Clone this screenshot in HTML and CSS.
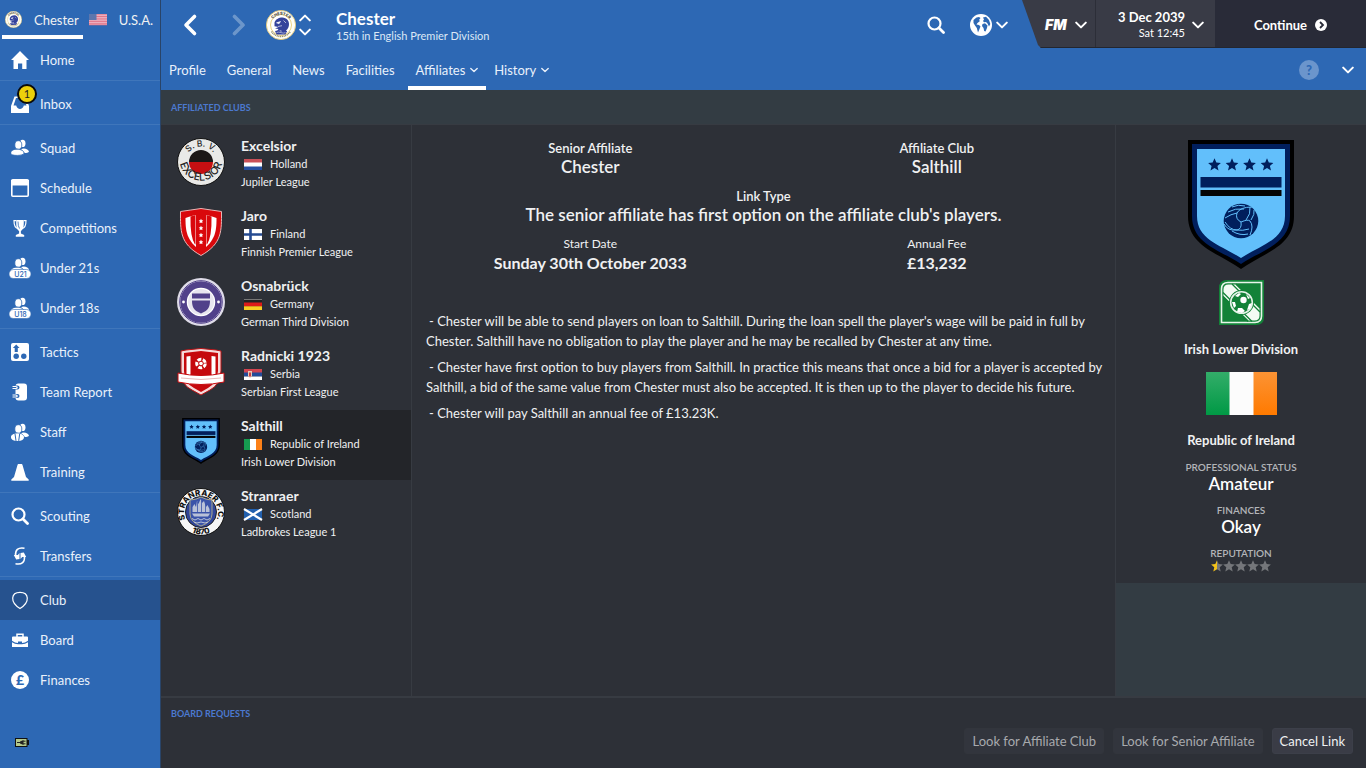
FILE: index.html
```html
<!DOCTYPE html>
<html lang="en">
<head>
<meta charset="utf-8">
<title>Chester - Affiliates</title>
<meta name="viewport" content="width=device-width, initial-scale=1">
<link rel="stylesheet" href="styles.css">
</head>
<body>
<svg class="sprite" aria-hidden="true">
  <symbol id="chev" viewBox="0 0 10 10"><path d="M1 3l4 4 4-4" fill="none" stroke="currentColor" stroke-width="1.700" stroke-linecap="round" stroke-linejoin="round"/></symbol>
  <symbol id="search" viewBox="0 0 18 18"><circle cx="7.500" cy="7.500" r="6" fill="none" stroke="currentColor" stroke-width="2.200"/><path d="M12 12l4.500 4.500" stroke="currentColor" stroke-width="2.800" stroke-linecap="round"/></symbol>
  <symbol id="people" viewBox="0 0 18 18"><g fill="currentColor"><ellipse cx="11.600" cy="4.400" rx="2.900" ry="3.700"/><path d="M10 10.200c3-2 7.600 0 8 2.600-.5.800-2.500 1.200-4.300 1.200z"/></g><g fill="currentColor" stroke="var(--bg)" stroke-width=".8"><ellipse cx="7.300" cy="6" rx="3.500" ry="4.300"/><path d="M-.3 14.200c0-2.700 3-4 6.300-4s7 1.300 7 4-13.300 3.200-13.300 0z"/></g></symbol>
  <symbol id="crest-chester" viewBox="0 0 30 30">
    <circle cx="15" cy="15" r="14.600" fill="#fffef5" stroke="#e5c878" stroke-width=".9"/>
    <circle cx="15" cy="15" r="10.500" fill="#fff" stroke="#ecd281" stroke-width="1"/>
    <path id="chester-arc" d="M4.900 15a10.100 10.100 0 0 1 20.200 0" fill="none"/>
    <text class="crest-text" font-size="4" fill="#454545" text-anchor="middle"><textPath href="#chester-arc" startOffset="50%">CHESTER</textPath></text>
    <path d="M5.500 21.500a11.500 11.500 0 0 0 19 0" fill="none" stroke="#8a8566" stroke-width="1.500" stroke-dasharray="1 .7"/>
    <path d="M8.500 12.500c1-3 4-5 8-5 4 .3 6.500 3 6.500 6.500 0 3-1 5-3 6.500l1 1.500h-4l-2-1.500-4 .8 1.500-2.300-3.500-.5 3.500-1.500-4-.8z" fill="#34429b"/>
    <path d="M10.500 12.800l4-1.300-1.500 2.300zM12 16.500l4-.8M17.500 10.500l2.500 2.500" fill="#fff" stroke="#fff" stroke-width=".6"/>
    <path d="M9 21q3-1 6 .5 3-1.500 6-.5l-1.500 3.500h-9z" fill="#34429b"/><path d="M10.500 22.600q2-1 4.500 0 2.500 1 4.500 0" fill="none" stroke="#fff" stroke-width=".5"/>
  </symbol>
  <symbol id="star" viewBox="0 0 12 12"><path d="M6 .2l1.700 3.900 4.200.4-3.200 2.800 1 4.200L6 9.300l-3.700 2.200 1-4.200L.1 4.500l4.200-.4z"/></symbol>
  <symbol id="crest-salthill" viewBox="0 0 106 129">
    <path d="M0 0h106v76c0 31-31 37-53 53C31 113 0 107 0 76z" fill="#000"/>
    <path d="M4 4h98v72c0 28-28 34-49 48C32 110 4 104 4 76z" fill="#011f5d"/>
    <path d="M9 9h88v67c0 24-24 29-44 42C33 105 9 100 9 76z" fill="#62bffb"/>
    <g fill="#011f5d"><use href="#star" x="20" y="18" width="13" height="13"/><use href="#star" x="37.500" y="18" width="13" height="13"/><use href="#star" x="55" y="18" width="13" height="13"/><use href="#star" x="72.500" y="18" width="13" height="13"/></g>
    <path d="M12.500 37h81v10.500h-81z" fill="#011f5d"/><path d="M12.500 50h81v6h-81z" fill="#050505"/>
    <circle cx="53" cy="81" r="17.300" fill="#011f5d"/>
    <path d="M53 82q-6-3-4-9 3-6 15-6M53 82q7-3 9-1 4 5 0 14M53 82q1 7-4 8-7 0-12-8M49 73q-6 1-12 5M44 67q6-3 13-1M40 72q7-4 16-3M58 80q5-6 4-13M63 80q4-6 3-10M48 90q7 1 13-1M44 91q8 5 16 3M36 84q4 7 12 6" fill="none" stroke="#62bffb" stroke-width="1"/>
  </symbol>
</svg>

<aside class="sidebar">
  <div class="managed">
    <a class="managed-tab is-active" href="#chester"><svg class="managed-crest" aria-hidden="true"><use href="#crest-chester"/></svg>Chester</a>
    <a class="managed-tab" href="#usa"><svg class="flag" viewBox="0 0 18 11" aria-hidden="true"><path fill="#f1c6d4" d="M0 0h18v11H0z"/><path d="M0 .8h18M0 2.500h18M0 4.200h18M0 5.900h18M0 7.600h18M0 9.300h18M0 10.800h18" stroke="#df6c80" stroke-width=".9"/><path fill="#5d76ad" d="M0 0h7.500v6H0z"/></svg>U.S.A.</a>
  </div>
  <nav class="nav" aria-label="Main">
    <div class="nav-group">
      <a class="nav-item" href="#home"><svg class="nav-icon" viewBox="0 0 18 18"><path fill="currentColor" d="M9 0l9 9h-2.500v9h-4.300v-5.500H7V18H2.500V9H0z"/></svg>Home</a>
    </div>
    <div class="nav-group">
      <a class="nav-item" href="#inbox"><svg class="nav-icon" viewBox="0 0 18 18"><path fill="currentColor" fill-rule="evenodd" d="M3.500 1.500h11L18 11v7H0v-7zM5 3L2.500 10.500h2.700c1 4.500 6.600 4.500 7.600 0h2.700L13 3z"/></svg><span class="badge">1</span>Inbox</a>
    </div>
    <div class="nav-group">
      <a class="nav-item" href="#squad"><svg class="nav-icon"><use href="#people"/></svg>Squad</a>
      <a class="nav-item" href="#schedule"><svg class="nav-icon" viewBox="0 0 18 18"><rect x=".8" y=".8" width="16.400" height="16.400" rx="1" fill="none" stroke="currentColor" stroke-width="1.600"/><path fill="currentColor" d="M0 1h18v5.500H0z"/></svg>Schedule</a>
      <a class="nav-item" href="#competitions"><svg class="nav-icon" viewBox="0 0 18 18"><path fill="currentColor" d="M5.200 1h7.600c0 6 0 9-2.900 11v2.500l3.300 1.500v1.700H4.800V16l3.300-1.500V12C5.200 10 5.200 7 5.200 1z"/><path fill="none" stroke="currentColor" stroke-width="1.200" d="M5 1.700H3c0 4 .5 7 4 8M13 1.700h2c0 4-.5 7-4 8"/><path d="M7 2.500q0 5 1.500 7" fill="none" stroke="#2d68b4" stroke-width=".8"/></svg>Competitions</a>
      <a class="nav-item" href="#u21"><svg class="nav-icon wide" viewBox="0 0 22 22"><use href="#people" x="2" y="0" width="18" height="18"/><rect y="12.500" width="22" height="9" rx="4.500" fill="currentColor" stroke="#2d68b4" stroke-width=".6"/><text class="icon-text" x="11.500" y="19.500" text-anchor="middle">U21</text></svg>Under 21s</a>
      <a class="nav-item" href="#u18"><svg class="nav-icon wide" viewBox="0 0 22 22"><use href="#people" x="2" y="0" width="18" height="18"/><rect y="12.500" width="22" height="9" rx="4.500" fill="currentColor" stroke="#2d68b4" stroke-width=".6"/><text class="icon-text" x="11.500" y="19.500" text-anchor="middle">U18</text></svg>Under 18s</a>
    </div>
    <div class="nav-group">
      <a class="nav-item" href="#tactics"><svg class="nav-icon" viewBox="0 0 18 18"><rect width="18" height="18" rx="2" fill="currentColor"/><g fill="#2d68b4"><circle cx="5.200" cy="13.300" r="2.700"/><circle cx="12.800" cy="13.300" r="2.700"/><path d="M5.200 1.500L8.600 5H6.800v4H3.700V5H1.900z"/></g></svg>Tactics</a>
      <a class="nav-item" href="#report"><svg class="nav-icon" viewBox="0 0 18 18"><rect x="4.500" y=".5" width="11.500" height="17" rx="3" fill="currentColor"/><path d="M2 4.500h4.500M2 13h4.500" stroke="#2d68b4" stroke-width="4" stroke-linecap="round"/><path d="M1.500 3.500h3.300q1.400 0 1.400 1T4.800 5.500H1.500M1.500 12h3.300q1.400 0 1.400 1t-1.400 1H1.500" stroke="currentColor" fill="none" stroke-width="1.200"/></svg>Team Report</a>
      <a class="nav-item" href="#staff"><svg class="nav-icon" viewBox="0 0 18 18"><use href="#people" width="18" height="18"/><path fill="currentColor" d="M0 14q1-3.500 6.500-3.500T13 14q0 4-6.500 4T0 14z"/><path d="M4 10.800l1 7M8.700 10.800l-1 7" stroke="#2d68b4"/></svg>Staff</a>
      <a class="nav-item" href="#training"><svg class="nav-icon" viewBox="0 0 18 18"><path fill="currentColor" d="M7.300 1h3.400q.5 0 .8 1l3.500 12 2.700 2.500v1.200H.3v-1.200L3 14 6.500 2q.3-1 .8-1z"/></svg>Training</a>
    </div>
    <div class="nav-group">
      <a class="nav-item" href="#scouting"><svg class="nav-icon"><use href="#search"/></svg>Scouting</a>
      <a class="nav-item" href="#transfers"><svg class="nav-icon" viewBox="0 0 18 18"><path fill="none" stroke="currentColor" stroke-width="1.500" d="M13.500 1.200C7 0 4 3 4.500 9M4.500 16.800c6.500 1.200 9.500-1.800 9-7.800"/><path fill="currentColor" d="M2.800 8l2.400 4.500L8.500 12V6L6.800 8zM15.200 10l-2.400-4.500L9.500 6v6L11.200 10z"/></svg>Transfers</a>
    </div>
    <div class="nav-group">
      <a class="nav-item is-active" href="#club" aria-current="page"><svg class="nav-icon" viewBox="0 0 18 18"><path fill="none" stroke="currentColor" stroke-width="1.200" d="M9 17.500C5 15 1.500 11 1.700 7 2 2.500 5.500 1.300 9 1.300s7 1.200 7.300 5.700C16.500 11 13 15 9 17.500z"/></svg>Club</a>
      <a class="nav-item" href="#board"><svg class="nav-icon" viewBox="0 0 18 18"><path fill="none" stroke="currentColor" stroke-width="1.500" d="M6 6V3.200h6V6"/><path fill="currentColor" d="M2 5.500h14q1 0 1 1v3.200q-3 2.300-6 2.300v-1.500H7V12q-3 0-6-2.300V6.500q0-1 1-1zM1 11.200Q4 13 7 13.200h4q3-.2 6-2V16H1z"/></svg>Board</a>
      <a class="nav-item" href="#finances"><svg class="nav-icon" viewBox="0 0 18 18"><circle cx="9" cy="9" r="9" fill="currentColor"/><text class="pound" x="9" y="14" text-anchor="middle">£</text></svg>Finances</a>
    </div>
  </nav>
  <svg class="battery" viewBox="0 0 14 9" role="img" aria-label="Battery charging"><rect x=".5" y=".5" width="11.500" height="8" fill="#b3c88b" stroke="#111"/><path d="M12 2h2v5h-2z" fill="#111"/><path d="M2 4.500h3m3-1.300h2.500M8 5.800h2.500" stroke="#222"/><path d="M8.500 2v5L5 5.500v-2z" fill="#222"/></svg>
</aside>

<div class="app">
  <header class="header">
    <div class="topbar">
      <button class="icon-btn back" aria-label="Back"><svg viewBox="0 0 14 22"><path d="M11.500 2.500L3 11l8.500 8.500" fill="none" stroke="currentColor" stroke-width="3.600" stroke-linecap="round" stroke-linejoin="round"/></svg></button>
      <button class="icon-btn back forward" aria-label="Forward" disabled><svg viewBox="0 0 14 22"><path d="M2.500 2.500L11 11l-8.500 8.500" fill="none" stroke="currentColor" stroke-width="3.600" stroke-linecap="round" stroke-linejoin="round"/></svg></button>
      <svg class="header-crest" role="img" aria-label="Chester crest"><use href="#crest-chester"/></svg>
      <div class="stepper">
        <button class="icon-btn" aria-label="Previous club"><svg class="chev up"><use href="#chev"/></svg></button>
        <button class="icon-btn" aria-label="Next club"><svg class="chev"><use href="#chev"/></svg></button>
      </div>
      <div class="heading"><h1 class="title">Chester</h1><p class="subtitle">15th in English Premier Division</p></div>
      <button class="icon-btn search" aria-label="Search"><svg><use href="#search"/></svg></button>
      <button class="icon-btn globe" aria-label="World"><svg class="world" viewBox="0 0 22 22"><circle cx="11" cy="11" r="11" fill="#fff"/><path fill="#2d68b4" d="M3.500 6l3-2.500L9 3l1.500 1L9 6l1 1-2.500 2-1 1.500L9 11l1.500 1.500L9.500 15 8 18.500 6.800 14 5 11.500 3.500 9zM13 3.500l3-.8 3 3.300 1.300 4-1.300 2.500-1.500-3L16 8l-2 .3L13 7l1-1.500zM12.500 10l2.500-.7 2.500 2.200-.5 2.500-1.500 3.500-1.300-.5L13.500 14 12 12z"/></svg><svg class="chev"><use href="#chev"/></svg></button>
      <div class="clock">
        <button class="clock-btn fm-btn" aria-label="FM menu"><span class="fm">FM</span><svg class="chev"><use href="#chev"/></svg></button>
        <button class="clock-btn date-btn"><span class="date"><strong>3 Dec 2039</strong><span>Sat 12:45</span></span><svg class="chev"><use href="#chev"/></svg></button>
        <button class="clock-btn continue">Continue<svg class="go" viewBox="0 0 12 12"><circle cx="6" cy="6" r="6" fill="#fff"/><path d="M5 3l3 3-3 3" fill="none" stroke="#292b38" stroke-width="1.800"/></svg></button>
      </div>
    </div>
    <div class="tabbar">
      <nav class="tabs" aria-label="Club">
        <a class="tab" href="#profile">Profile</a>
        <a class="tab" href="#general">General</a>
        <a class="tab" href="#news">News</a>
        <a class="tab" href="#facilities">Facilities</a>
        <a class="tab has-menu is-active" href="#affiliates">Affiliates<svg><use href="#chev"/></svg></a>
        <a class="tab has-menu" href="#history">History<svg><use href="#chev"/></svg></a>
      </nav>
      <button class="help" aria-label="Help">?</button>
      <button class="icon-btn more" aria-label="More"><svg class="chev"><use href="#chev"/></svg></button>
    </div>
  </header>

  <h2 class="section-title">AFFILIATED CLUBS</h2>

  <div class="content">
    <ul class="clubs">
      <li><a class="club" href="#excelsior">
        <svg class="crest" viewBox="0 0 48 48"><circle cx="24" cy="24" r="23.500" fill="#e9e9e7" stroke="#111"/><path d="M12 24a12 12 0 0 1 24 0z" fill="#1b1717"/><path d="M12 24a12 12 0 0 0 24 0z" fill="#c50f12"/><path id="ex-top" d="M8.500 24a15.500 15.500 0 0 1 31 0" fill="none"/><path id="ex-bot" d="M2.500 21a21.500 21.500 0 1 0 43 0" fill="none"/><g class="crest-text thin" fill="#222" text-anchor="middle"><text font-size="8.500"><textPath href="#ex-top" startOffset="50%">S. B. V.</textPath></text><text font-size="10.500"><textPath href="#ex-bot" startOffset="50%">EXCELSIOR</textPath></text></g></svg>
        <span class="club-info"><strong class="club-name">Excelsior</strong><span class="nation"><svg class="flag" viewBox="0 0 18 11"><path fill="#fff" d="M0 0h18v11H0z"/><path fill="#c95058" d="M0 0h18v3.500H0z"/><path fill="#244fa1" d="M0 7.500h18V11H0z"/></svg>Holland</span><span>Jupiler League</span></span></a></li>
      <li><a class="club" href="#jaro">
        <svg class="crest" viewBox="0 0 48 48"><path d="M3.500 3.500Q14 2 24 .5q10 1.500 20.500 3c0 19 1 32-20.500 44C2.500 35.500 3.500 22.500 3.500 3.500z" fill="#d9080c" stroke="#e8b6b6"/><path d="M8.500 10q7-3 15.500-3t15.500 3c0 13-1 23-15.500 33C9.500 33 8.500 23 8.500 10z" fill="#fff"/><path d="M13.500 8.500l4.500-1v29q-5-8-4.500-28zM34.500 8.500l-4.500-1v29q5-8 4.500-28z" fill="#d9080c"/><path d="M14 9q0 18 4.500 28V7.500zM34 9q0 18-4.500 28V7.500z" fill="#d9080c"/><path d="M19 7h10v33l-5 4-5-4z" fill="#d9080c"/><g fill="#fff"><use href="#star" x="21.500" y="10.500" width="5" height="5"/><use href="#star" x="21.500" y="17.500" width="5" height="5"/><use href="#star" x="21.500" y="24.500" width="5" height="5"/><use href="#star" x="21.500" y="31.500" width="5" height="5"/></g></svg>
        <span class="club-info"><strong class="club-name">Jaro</strong><span class="nation"><svg class="flag" viewBox="0 0 18 11"><path fill="#fff" d="M0 0h18v11H0z"/><path d="M6.500 0v11M0 5.500h18" stroke="#264b91" stroke-width="2.600"/></svg>Finland</span><span>Finnish Premier League</span></span></a></li>
      <li><a class="club" href="#osnabruck">
        <svg class="crest" viewBox="0 0 48 48"><circle cx="24" cy="24" r="24" fill="#dedbe8"/><circle cx="24" cy="24" r="21.300" fill="#fff" stroke="#51418a" stroke-width="1"/><circle cx="24" cy="24" r="17.500" fill="none" stroke="#51418a" stroke-width="6.500"/><circle cx="24" cy="24" r="13" fill="#e8e6ef"/><path d="M15 15.500h18v5H15zM15 22.500h18c0 7-2 10-9 13-7-3-9-6-9-13z" fill="#51418a"/><circle cx="6.500" cy="24" r="1.400" fill="#fff"/><circle cx="41.500" cy="24" r="1.400" fill="#fff"/></svg>
        <span class="club-info"><strong class="club-name">Osnabrück</strong><span class="nation"><svg class="flag" viewBox="0 0 18 11"><path fill="#222" d="M0 0h18v3.700H0z"/><path fill="#777" d="M0 0h18v1H0z"/><path fill="#dd1b19" d="M0 3.500h18v4H0z"/><path fill="#f8ce22" d="M0 7.300h18V11H0z"/></svg>Germany</span><span>German Third Division</span></span></a></li>
      <li><a class="club" href="#radnicki">
        <svg class="crest" viewBox="0 0 48 48"><path d="M4 3l5-1 15-1.500L39 2l5 1v20q-1 14-11 19l-9 5-9-5Q4 37 4 23z" fill="#f5dada" stroke="#b91215"/><path d="M7 5l17-2 17 2v18q-1 12-10 17l-7 4-7-4Q7 35 7 23z" fill="#c5090d"/><path d="M9.500 8.500l4-.5v28q-4-4-4-10zM38.500 8.500l-4-.5v28q4-4 4-10z" fill="#fff"/><circle cx="24" cy="15.500" r="4.300" fill="none" stroke="#fff" stroke-width="3" stroke-dasharray="3.900 1.500"/><circle cx="24" cy="15.500" r="1.800" fill="#fff"/><path d="M1 25q23 5 46 0v9q-23 5-46 0z" fill="#fff" stroke="#c5090d"/><path d="M4 30q20 3 40 0" fill="none" stroke="#e8b9b9"/></svg>
        <span class="club-info"><strong class="club-name">Radnicki 1923</strong><span class="nation"><svg class="flag" viewBox="0 0 18 11"><path fill="#d24450" d="M0 0h18v4H0z"/><path fill="#234b9a" d="M0 3.500h18v4H0z"/><path fill="#fff" d="M0 7.500h18V11H0z"/><path fill="#e8c8b5" d="M4 2h4v5L6 9 4 7z"/><path fill="#c93f43" d="M5 3.500h2v4H5z"/></svg>Serbia</span><span>Serbian First League</span></span></a></li>
      <li><a class="club is-active" href="#salthill" aria-current="true">
        <span class="crest"><svg class="crest-inner"><use href="#crest-salthill"/></svg></span>
        <span class="club-info"><strong class="club-name">Salthill</strong><span class="nation"><svg class="flag" viewBox="0 0 18 11"><path fill="#fff" d="M0 0h18v11H0z"/><path fill="#169b50" d="M0 0h6v11H0z"/><path fill="#fc8118" d="M12 0h6v11h-6z"/></svg>Republic of Ireland</span><span>Irish Lower Division</span></span></a></li>
      <li><a class="club" href="#stranraer">
        <svg class="crest" viewBox="0 0 48 48"><circle cx="24" cy="24" r="23.500" fill="#f6f6f6" stroke="#111"/><circle cx="24" cy="24" r="15.500" fill="#30469a" stroke="#222"/><path d="M13 12q6 0 11-3 5 3 11 3v14q0 8-11 12-11-4-11-12z" fill="#3a54a9" stroke="#a7a68d"/><path d="M15.500 24v-5l2-3 1.500 3 1-6 1.500 3 2-5 1.500 4 2-2 2 6 1.500-2 2 4v3zM15 25.500h18l-2 3H17z" fill="#b9c2d8"/><path d="M20.500 14v10M24.500 13v11M28.500 15v9" stroke="#3a54a9" stroke-width=".8"/><path d="M15 30.500l3 1.500 3-1.500 3 1.500 3-1.500 3 1.500 3-1.500M17 34l3 1 4-1 4 1 3-1" fill="none" stroke="#b9c2d8"/><path id="st-top" d="M10.700 35.100a17 17 0 1 1 26.600 0" fill="none"/><path id="st-bot" d="M1.500 24a22.500 22.500 0 0 0 45 0" fill="none"/><g class="crest-text" fill="#111" text-anchor="middle"><text font-size="8"><textPath href="#st-top" startOffset="50%">STRANRAER F.C.</textPath></text><text font-size="8"><textPath href="#st-bot" startOffset="50%">1870</textPath></text></g></svg>
        <span class="club-info"><strong class="club-name">Stranraer</strong><span class="nation"><svg class="flag" viewBox="0 0 18 11"><path fill="#2260ae" d="M0 0h18v11H0z"/><path d="M0 0l18 11M18 0L0 11" stroke="#fff" stroke-width="2.200"/></svg>Scotland</span><span>Ladbrokes League 1</span></span></a></li>
    </ul>

    <main class="details">
      <dl class="facts">
        <div><dt class="semi">Senior Affiliate</dt><dd>Chester</dd></div>
        <div><dt class="semi">Affiliate Club</dt><dd>Salthill</dd></div>
        <div class="full"><dt class="semi">Link Type</dt><dd>The senior affiliate has first option on the affiliate club's players.</dd></div>
        <div><dt>Start Date</dt><dd class="strong">Sunday 30th October 2033</dd></div>
        <div><dt>Annual Fee</dt><dd class="strong">£13,232</dd></div>
      </dl>
      <div class="terms">
        <p>- Chester will be able to send players on loan to Salthill. During the loan spell the player's wage will be paid in full by Chester. Salthill have no obligation to play the player and he may be recalled by Chester at any time.</p>
        <p>- Chester have first option to buy players from Salthill. In practice this means that once a bid for a player is accepted by Salthill, a bid of the same value from Chester must also be accepted. It is then up to the player to decide his future.</p>
        <p>- Chester will pay Salthill an annual fee of £13.23K.</p>
      </div>
    </main>

    <aside class="side">
      <div class="profile">
        <svg class="big-crest" role="img" aria-label="Salthill crest"><use href="#crest-salthill"/></svg>
        <svg class="league" viewBox="0 0 45 45" role="img" aria-label="League logo"><path d="M8 0h37v37q0 8-8 8H0V8q0-8 8-8z" fill="#138238"/><path d="M9 2.500h33.500V36q0 6.500-6.500 6.500H2.500V9q0-6.500 6.500-6.500z" fill="none" stroke="#e8f5ea" stroke-width="1.600"/><path d="M4.500 16V9.500q0-5 5-5h7l24 23.500v7.500q0 5-5 5h-6z" fill="#f4fbf4"/><path d="M4 12.500l29 29M4 16.500l25 25M13 4l28 28M17 4l24 24" stroke="#138238" stroke-width="1.300"/><circle cx="22.500" cy="22.500" r="12.500" fill="#138238"/><circle cx="22.500" cy="22.500" r="10.800" fill="#138238" stroke="#e5f3e8" stroke-width="1.600"/><circle cx="24.500" cy="20" r="3.200" fill="#fff"/><path d="M13 22l3 0 1 4-2 2zM18 32l1-4 4 0 3 3-3 2zM30 24l3-1-2 6-3 1zM16 16l4-3 2 1-3 3zM27 14l4 4-2 1z" fill="#fff"/></svg>
        <p class="place">Irish Lower Division</p>
        <svg class="big-flag" viewBox="0 0 71 43" role="img" aria-label="Irish flag"><defs><linearGradient id="fg" x2="0" y2="1"><stop stop-color="#33ad69"/><stop offset="1" stop-color="#009945"/></linearGradient><linearGradient id="fo" x2="0" y2="1"><stop stop-color="#fc9334"/><stop offset="1" stop-color="#ff7a00"/></linearGradient></defs><path fill="#fcfcfc" d="M0 0h71v43H0z"/><path fill="url(#fg)" d="M0 0h23.500v43H0z"/><path fill="url(#fo)" d="M47.500 0H71v43H47.500z"/></svg>
        <p class="place">Republic of Ireland</p>
        <dl class="stats">
          <div><dt>PROFESSIONAL STATUS</dt><dd>Amateur</dd></div>
          <div><dt>FINANCES</dt><dd>Okay</dd></div>
          <div><dt>REPUTATION</dt><dd class="stars"><svg viewBox="0 0 60 12" role="img" aria-label="Half a star out of five"><defs><linearGradient id="half"><stop offset=".5" stop-color="#f2c21a"/><stop offset=".5" stop-color="#74767a"/></linearGradient></defs><use href="#star" width="12" height="12" fill="url(#half)"/><g fill="#74767a"><use href="#star" x="12" width="12" height="12"/><use href="#star" x="24" width="12" height="12"/><use href="#star" x="36" width="12" height="12"/><use href="#star" x="48" width="12" height="12"/></g></svg></dd></div>
        </dl>
      </div>
    </aside>
  </div>

  <footer class="footer">
    <h2 class="section-title">BOARD REQUESTS</h2>
    <div class="actions">
      <button class="btn" disabled>Look for Affiliate Club</button>
      <button class="btn" disabled>Look for Senior Affiliate</button>
      <button class="btn">Cancel Link</button>
    </div>
  </footer>
</div>
</body>
</html>
```
FILE: styles.css
```css
:root {
  --blue: #2d68b4;
  --panel: #2d3037;
  --slate: #333c43;
  --line: #373b42;
}

* { box-sizing: border-box; }

body {
  margin: 0;
  min-height: 100vh;
  display: flex;
  background: var(--panel);
  color: #f0f1f2;
  font: 13px/18px Lato, "Open Sans", sans-serif;
}

h1, h2, p, ul, dl, dd { margin: 0; }
ul { padding: 0; list-style: none; }
a { color: inherit; text-decoration: none; }
button { font: inherit; color: inherit; border: 0; padding: 0; background: none; }
svg { display: block; flex: none; overflow: visible; }
.sprite { position: absolute; width: 0; height: 0; }
.crest-text { font-family: Inter, sans-serif; font-weight: 800; }
.crest-text.thin { font-weight: 500; }
.flag { width: 18px; height: 11px; }

/* Sidebar */
.sidebar {
  --bg: var(--blue);
  flex: none;
  width: 161px;
  display: flex;
  flex-direction: column;
  background: var(--blue);
  border-right: 1px solid #294468;
}
.managed { display: flex; gap: 2px; height: 39px; margin-bottom: 1px; padding-left: 2px; }
.managed-tab { display: flex; align-items: center; gap: 12px; padding: 4px 4px 0; border-bottom: 4px solid transparent; }
.managed-tab.is-active { padding-left: 3px; border-color: #fff; }
.managed-crest { width: 17px; height: 17px; }
.nav-group:not(:last-child) { margin-bottom: 3px; border-bottom: 1px solid #3f76bb; }
.nav-item { position: relative; display: flex; align-items: center; gap: 11px; height: 40px; padding-left: 11px; color: #e9f1fb; }
.nav-item.is-active { background: #26528e; }
.nav-icon { width: 18px; height: 18px; color: #fff; }
.nav-icon.wide { width: 22px; height: 22px; margin: 0 -2px; }
.icon-text { font: 500 7px Inter, sans-serif; fill: #2d68b4; }
.pound { font: 900 14px Lato, sans-serif; fill: #2d68b4; }
.badge {
  position: absolute;
  left: 17px;
  top: 0;
  width: 20px;
  height: 20px;
  border: 2px solid #0b0b0b;
  border-radius: 50%;
  background: #ecd00b;
  color: #222;
  font-size: 11px;
  line-height: 16px;
  text-align: center;
}
.battery { width: 14px; height: 9px; margin: auto 0 21px 15px; }

/* Header */
.app { flex: 1; min-width: 0; display: flex; flex-direction: column; }
.header { background: var(--blue); height: 90px; color: #fff; }
.topbar { display: flex; align-items: center; height: 50px; padding-left: 22px; }
.icon-btn { display: flex; align-items: center; }
.back svg { width: 14px; height: 22px; }
.forward { margin: 0 20px 0 35px; opacity: .3; }
.header-crest { width: 30px; height: 30px; }
.chev { width: 12px; height: 12px; }
.up { transform: rotate(180deg); }
.stepper { display: grid; gap: 2px; margin-left: 3px; }
.heading { flex: 1; margin-left: 25px; padding-top: 3px; }
.title { font-size: 17px; line-height: 18px; font-weight: 700; }
.subtitle { font-size: 11px; line-height: 16px; color: #dce8f6; }
.search svg { width: 18px; height: 18px; }
.globe { gap: 4px; margin: 0 14px 0 25px; }
.world { width: 22px; height: 22px; }
.clock { display: flex; align-self: flex-start; height: 48px; background: #393b46; clip-path: polygon(0 0, 100% 0, 100% 100%, 19px 100%, 16px 45px); border-bottom: 1px solid #23262f; }
.clock-btn { display: flex; align-items: center; padding-top: 2px; }
.fm-btn { width: 73px; gap: 8px; padding-left: 23px; }
.fm { font: italic 900 14px/18px Inter, sans-serif; }
.date-btn { width: 120px; justify-content: flex-end; gap: 7px; padding-right: 11px; border-left: 1px solid #2c2e38; }
.date { display: grid; text-align: right; font-size: 11px; line-height: 14px; }
.date strong { font-size: 13px; line-height: 17px; }
.continue { width: 151px; justify-content: center; gap: 8px; background: #292b38; font-weight: 700; }
.go { width: 12px; height: 12px; }

.tabbar { display: flex; align-items: center; height: 40px; padding-right: 12px; }
.tabs { flex: 1; display: flex; align-self: stretch; }
.tab { display: flex; align-items: center; gap: 5px; margin-right: 5px; padding: 4px 8px 0; border-bottom: 4px solid transparent; color: #e9f1fb; }
.tab.has-menu { margin-right: 0; }
.tab svg { width: 8px; height: 8px; }
.tab.is-active { border-color: #fff; }
.help { width: 20px; height: 20px; border-radius: 50%; background: #6b95cc; color: #2d68b4; font-weight: 900; }
.more { margin-left: 23px; }

/* Content */
.section-title { padding: 2px 10px 0; font-size: 9px; line-height: 32px; font-weight: 700; color: #4b79cf; }
.app > .section-title { background: var(--slate); }
.content { flex: 1; display: flex; border-top: 1px solid var(--line); border-bottom: 2px solid var(--line); }
.clubs { flex: none; width: 250px; padding-top: 5px; }
.club { display: flex; align-items: flex-start; gap: 16px; height: 70px; padding: 7px 16px 0; }
.club.is-active { background: #232529; }
.crest { width: 48px; height: 48px; margin-top: 1px; }
.crest-inner { width: 38px; height: 46px; margin: 0 auto; }
.club-info { display: grid; align-content: start; font-size: 11px; line-height: 18px; }
.club-name { font-size: 14px; line-height: 18px; }
.nation { display: flex; align-items: center; gap: 8px; padding-left: 3px; }
.details { flex: 1; padding: 14px 5px; border-left: 1px solid var(--line); border-right: 1px solid var(--line); }
.facts { display: grid; grid-template-columns: 1fr 1fr; row-gap: 10px; text-align: center; }
.full { grid-column: 1 / -1; }
.facts dt { font-size: 12px; line-height: 18px; }
.facts .semi { font-size: 13px; font-weight: 600; }
.facts dd { font-size: 17px; line-height: 20px; font-weight: 600; }
.facts .strong { font-size: 16px; font-weight: 700; }
.terms { display: grid; gap: 6px; margin-top: 38px; padding-left: 9px; line-height: 20px; }
.terms p { text-indent: 3px; }
.side { flex: none; width: 250px; background: var(--slate); }
.profile { display: flex; flex-direction: column; align-items: center; padding: 15px 0 11px; background: var(--panel); text-align: center; }
.big-crest { width: 106px; height: 129px; }
.league { width: 45px; height: 45px; margin: 11px 0 15px; }
.place { font-weight: 700; }
.big-flag { width: 71px; height: 43px; margin: 14px 0 16px; }
.stats { display: grid; gap: 9px; margin-top: 11px; }
.stats dt { font-size: 10px; line-height: 14px; font-weight: 600; color: #b3b5b9; }
.stats dd { font-size: 17px; line-height: 20px; font-weight: 600; color: #fff; }
.stars svg { width: 60px; height: 12px; margin: 0 auto; }

.footer { height: 70px; }
.footer .section-title { line-height: 28px; }
.actions { display: flex; justify-content: flex-end; gap: 9px; padding-right: 13px; }
.btn { height: 26px; padding: 0 7px; border: 1px solid #3c3f49; border-radius: 3px; background: #3a3c46; }
.btn:disabled { border-color: #32353c; background: #32353d; color: #a8aaae; }
```
